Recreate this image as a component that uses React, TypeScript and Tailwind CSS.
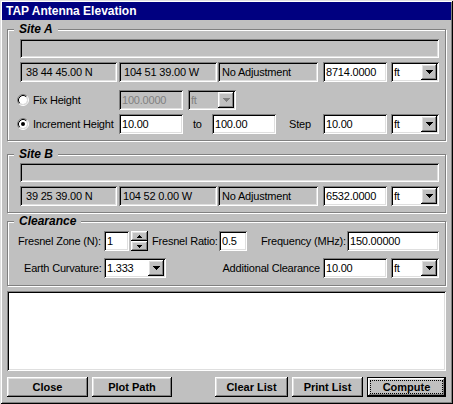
import React from "react";

const sunken =
  "shadow-[inset_1px_1px_0_#808080,inset_-1px_-1px_0_#ffffff,inset_2px_2px_0_#000000,inset_-2px_-2px_0_#dfdfdf]";
const raised =
  "shadow-[inset_-1px_-1px_0_#000000,inset_1px_1px_0_#ffffff,inset_-2px_-2px_0_#808080,inset_2px_2px_0_#dfdfdf]";

function DownArrow({ disabled = false }: { disabled?: boolean }) {
  return (
    <svg width="7" height="4" viewBox="0 0 7 4" className="block">
      <path
        d="M0 0h7v1H0zM1 1h5v1H1zM2 2h3v1H2zM3 3h1v1H3z"
        fill={disabled ? "#808080" : "#000000"}
      />
    </svg>
  );
}

function Static({ children, className = "" }: { children?: React.ReactNode; className?: string }) {
  return (
    <div className={`${sunken} flex h-[20px] items-center whitespace-nowrap bg-[#c0c0c0] ${className}`}>
      {children}
    </div>
  );
}

function Edit({
  value,
  className = "",
  disabled = false,
}: {
  value: string;
  className?: string;
  disabled?: boolean;
}) {
  return (
    <input
      readOnly
      disabled={disabled}
      defaultValue={value}
      className={`${sunken} h-[20px] px-[3px] outline-none ${
        disabled ? "bg-[#c0c0c0] text-[#808080]" : "bg-white text-black"
      } ${className}`}
    />
  );
}

function Combo({
  value,
  className = "",
  disabled = false,
}: {
  value: string;
  className?: string;
  disabled?: boolean;
}) {
  return (
    <div
      className={`${sunken} flex h-[20px] items-center p-[2px] ${
        disabled ? "bg-[#c0c0c0] text-[#808080]" : "bg-white"
      } ${className}`}
    >
      <span className="pl-[1px]">{value}</span>
      <span className={`${raised} ml-auto flex h-[16px] w-[16px] items-center justify-center bg-[#c0c0c0]`}>
        <DownArrow disabled={disabled} />
      </span>
    </div>
  );
}

function Radio({ checked = false }: { checked?: boolean }) {
  return (
    <svg width="12" height="12" viewBox="0 0 12 12" className="block shrink-0">
      <path d="M2.11 9.89A5.5 5.5 0 0 1 9.89 2.11" stroke="#808080" fill="none" />
      <path d="M9.89 2.11A5.5 5.5 0 0 1 2.11 9.89" stroke="#ffffff" fill="none" />
      <circle cx="6" cy="6" r="4" fill="#ffffff" />
      <path d="M2.82 9.18A4.5 4.5 0 0 1 9.18 2.82" stroke="#000000" fill="none" />
      <path d="M9.18 2.82A4.5 4.5 0 0 1 2.82 9.18" stroke="#dfdfdf" fill="none" />
      {checked && <circle cx="6" cy="6" r="2" fill="#000000" />}
    </svg>
  );
}

function Spinner({ className = "" }: { className?: string }) {
  return (
    <div className={`flex h-[20px] w-[17px] flex-col ${className}`}>
      <span className={`${raised} flex h-[10px] items-center justify-center bg-[#c0c0c0]`}>
        <svg width="5" height="3" viewBox="0 0 5 3" className="block">
          <path d="M2 0h1v1H2zM1 1h3v1H1zM0 2h5v1H0z" fill="#000000" />
        </svg>
      </span>
      <span className={`${raised} flex h-[10px] items-center justify-center bg-[#c0c0c0]`}>
        <svg width="5" height="3" viewBox="0 0 5 3" className="block">
          <path d="M0 0h5v1H0zM1 1h3v1H1zM2 2h1v1H2z" fill="#000000" />
        </svg>
      </span>
    </div>
  );
}

function Group({
  title,
  className = "",
  innerClassName = "",
  children,
}: {
  title: string;
  className?: string;
  innerClassName?: string;
  children: React.ReactNode;
}) {
  return (
    <fieldset
      className={`border border-[#808080] shadow-[1px_1px_0_#ffffff,inset_1px_1px_0_#ffffff] ${className}`}
    >
      <legend className="ml-[6px] bg-[#c0c0c0] px-[5px] text-[12px] font-bold italic leading-[13px] tracking-normal">
        {title}
      </legend>
      <div className={`pl-[12px] pr-[6px] ${innerClassName}`}>{children}</div>
    </fieldset>
  );
}

function Btn({ children, className = "" }: { children: React.ReactNode; className?: string }) {
  return (
    <button
      className={`${raised} flex h-[20px] items-center justify-center bg-[#c0c0c0] font-bold tracking-normal ${className}`}
    >
      {children}
    </button>
  );
}

export default function App() {
  return (
    <div className="h-[404px] w-[453px] bg-[#c0c0c0] p-[2px] font-['Liberation_Sans',Arial,sans-serif] text-[11px] tracking-[-0.2px] text-black shadow-[inset_1px_1px_0_#dfdfdf,inset_-1px_-1px_0_#000000,inset_2px_2px_0_#ffffff,inset_-2px_-2px_0_#808080]">
      {/* title bar */}
      <div className="flex h-[18px] items-center bg-[#000080] pl-[4px] text-[12px] font-bold tracking-normal text-white">
        TAP Antenna Elevation
      </div>

      <div className="px-[5px]">
        {/* Site A */}
        <Group title="Site A" className="mt-[3px]" innerClassName="pt-[3px] pb-[6px]">
          <div className={`${sunken} h-[19px] bg-[#c0c0c0]`} />
          <div className="mt-[4px] flex">
            <Static className="w-[97px] pl-[6px]">38 44 45.00 N</Static>
            <Static className="ml-[2px] w-[98px] pl-[5px]">104 51 39.00 W</Static>
            <Static className="ml-[1px] w-[100px] pl-[4px]">No Adjustment</Static>
            <Edit className="ml-[5px] w-[64px]" value="8714.0000" />
            <Combo className="ml-[4px] w-[48px]" value="ft" />
          </div>
          <div className="-ml-[3px] mt-[8px] flex h-[20px] items-center">
            <label className="flex w-[102px] items-center gap-[4px]">
              <Radio />
              Fix Height
            </label>
            <Edit className="w-[64px]" value="100.0000" disabled />
            <Combo className="ml-[5px] w-[48px]" value="ft" disabled />
          </div>
          <div className="-ml-[3px] mt-[4px] flex h-[20px] items-center">
            <label className="flex w-[102px] items-center gap-[4px] whitespace-nowrap">
              <Radio checked />
              Increment Height
            </label>
            <Edit className="w-[64px]" value="10.00" />
            <span className="w-[29px] pl-[10px]">to</span>
            <Edit className="w-[64px]" value="100.00" />
            <span className="w-[47px] pl-[13px]">Step</span>
            <Edit className="w-[64px]" value="10.00" />
            <Combo className="ml-[4px] w-[48px]" value="ft" />
          </div>
        </Group>

        {/* Site B */}
        <Group title="Site B" className="mt-[7px]" innerClassName="pt-[2px] pb-[6px]">
          <div className={`${sunken} h-[19px] bg-[#c0c0c0]`} />
          <div className="mt-[4px] flex">
            <Static className="w-[97px] pl-[6px]">39 25 39.00 N</Static>
            <Static className="ml-[2px] w-[98px] pl-[4px]">104 52 0.00 W</Static>
            <Static className="ml-[1px] w-[100px] pl-[4px]">No Adjustment</Static>
            <Edit className="ml-[5px] w-[64px]" value="6532.0000" />
            <Combo className="ml-[4px] w-[48px]" value="ft" />
          </div>
        </Group>

        {/* Clearance */}
        <Group title="Clearance" className="mt-[2px]" innerClassName="pt-[3px] pb-[7px]">
          <div className="-ml-[2px] flex h-[20px] items-center whitespace-nowrap">
            <span className="w-[86px]">Fresnel Zone (N):</span>
            <Edit className="w-[25px]" value="1" />
            <Spinner className="ml-[2px]" />
            <span className="ml-[4px] w-[67px]">Fresnel Ratio:</span>
            <Edit className="w-[28px]" value="0.5" />
            <span className="w-[100px] pl-[14px]">Frequency (MHz):</span>
            <Edit className="w-[92px]" value="150.00000" />
          </div>
          <div className="mt-[7px] flex h-[20px] items-center whitespace-nowrap">
            <span className="w-[84px] pl-[4px]">Earth Curvature:</span>
            <Combo className="w-[62px]" value="1.333" />
            <span className="w-[157px] pr-[3px] text-right">Additional Clearance</span>
            <Edit className="w-[64px]" value="10.00" />
            <Combo className="ml-[4px] w-[48px]" value="ft" />
          </div>
        </Group>

        {/* results list */}
        <div className={`${sunken} mt-[5px] h-[80px] bg-white`} />

        {/* buttons */}
        <div className="mt-[6px] flex h-[20px]">
          <Btn className="w-[81px]">Close</Btn>
          <Btn className="ml-[4px] w-[80px]">Plot Path</Btn>
          <Btn className="ml-auto w-[73px]">Clear List</Btn>
          <Btn className="ml-[4px] w-[71px]">Print List</Btn>
          <button className="ml-[4px] flex h-[20px] w-[79px] border border-black bg-[#c0c0c0] tracking-normal">
            <span className={`${raised} flex flex-1 p-[2px]`}>
              <span className="flex flex-1 items-center justify-center border border-dotted border-black font-bold">
                Compute
              </span>
            </span>
          </button>
        </div>
      </div>
    </div>
  );
}
